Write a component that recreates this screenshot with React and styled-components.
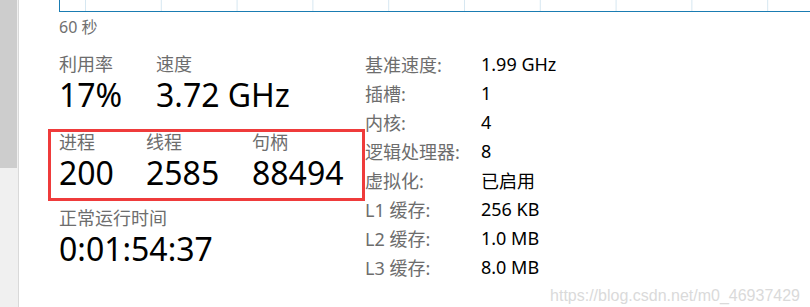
import styled, { createGlobalStyle } from 'styled-components'

const GlobalStyle = createGlobalStyle`
html, body {
  margin: 0;
  padding: 0;
  background: #fff;
}
body {
  width: 810px;
  height: 307px;
  overflow: hidden;
  font-family: "Noto Sans", "Noto Sans CJK SC", sans-serif;
}
`

const Page = styled.div`
position: relative;
display: flex;
width: 810px;
height: 307px;
overflow: hidden;
background: #fff;
`
const ScrollBar = styled.div`
width: 18px;
flex-shrink: 0;
display: flex;
flex-direction: column;
background: #f0f0f0;
border-right: 1px solid #d9d9d9;
`
const Thumb = styled.div`
width: 17px;
height: 168px;
background: #cdcdcd;
`
const ArrowButton = styled.div`
margin-top: auto;
height: 16px;
padding-top: 9px;
box-sizing: border-box;
overflow: hidden;
`
const Main = styled.div`
flex: 1;
min-width: 0;
padding-left: 40px;
display: flex;
flex-direction: column;
`
const Graph = styled.div`
height: 11px;
display: flex;
border-left: 1px solid #1a7cb2;
border-bottom: 1px solid #1a7cb2;
`
const GridLines = styled.div`
flex: 1;
margin-left: 25px;
background-image: linear-gradient(to right, #d6e7f1 1px, transparent 1px);
background-size: 75.8px 100%;
`
const Caption = styled.div`
margin-top: 4px;
font-size: 16px;
line-height: 22px;
color: #707070;
`
const Stats = styled.div`
display: flex;
margin-top: 11px;
`
const LeftCol = styled.div`
width: 306px;
flex-shrink: 0;
display: flex;
flex-direction: column;
padding-top: 5px;
box-sizing: border-box;
`
const Group = styled.div`
display: flex;
margin-top: ${p => p.$mt || 0}px;
`
const Highlight = styled(Group)`
width: 317px;
margin-left: -11px;
padding: 0 0 4px 8px;
border: 3px solid #ef3b3b;
box-sizing: border-box;
`
const Cell = styled.div`
width: ${p => (p.$w ? `${p.$w}px` : 'auto')};
flex-shrink: 0;
`
const Label = styled.div`
font-size: 18px;
line-height: 20px;
color: #6d6d6d;
white-space: nowrap;
`
const Value = styled.div`
font-size: 32px;
line-height: 42px;
color: #000;
white-space: nowrap;
`
const SpecGrid = styled.div`
display: grid;
grid-template-columns: 116px auto;
grid-auto-rows: 29px;
align-items: center;
font-size: 18px;
white-space: nowrap;
`
const SpecLabel = styled.div`
color: #6d6d6d;
`
const SpecValue = styled.div`
color: #000;
`
const Watermark = styled.div`
position: absolute;
right: 10px;
bottom: 2px;
font-family: "Liberation Sans", Arial, sans-serif;
font-size: 16px;
color: #dadada;
`

const specs = [
    ['基准速度:', '1.99 GHz'],
    ['插槽:', '1'],
    ['内核:', '4'],
    ['逻辑处理器:', '8'],
    ['虚拟化:', '已启用'],
    ['L1 缓存:', '256 KB'],
    ['L2 缓存:', '1.0 MB'],
    ['L3 缓存:', '8.0 MB'],
]

function Stat({ label, value, w }) {
    return (
        <Cell $w={w}>
            <Label>{label}</Label>
            <Value>{value}</Value>
        </Cell>
    )
}

function App() {
    const specRows = specs.map(([label, value]) => (
        <>
            <SpecLabel key={label + 'l'}>{label}</SpecLabel>
            <SpecValue key={label + 'v'}>{value}</SpecValue>
        </>
    ))

    return (
        <Page>
            <GlobalStyle />
            <ScrollBar>
                <Thumb />
                <ArrowButton>
                    <svg width="14" height="9" viewBox="0 0 14 9">
                        <path d="M0.8 1 L6.5 6.7 L12.2 1" fill="none" stroke="#606060" strokeWidth="1.6" />
                    </svg>
                </ArrowButton>
            </ScrollBar>
            <Main>
                <Graph><GridLines /></Graph>
                <Caption>60 秒</Caption>
                <Stats>
                    <LeftCol>
                        <Group>
                            <Stat w={97} label="利用率" value="17%" />
                            <Stat label="速度" value="3.72 GHz" />
                        </Group>
                        <Highlight $mt={13}>
                            <Stat w={87} label="进程" value="200" />
                            <Stat w={106} label="线程" value="2585" />
                            <Stat label="句柄" value="88494" />
                        </Highlight>
                        <Group $mt={7}>
                            <Stat label="正常运行时间" value="0:01:54:37" />
                        </Group>
                    </LeftCol>
                    <SpecGrid>{specRows}</SpecGrid>
                </Stats>
            </Main>
            <Watermark>https://blog.csdn.net/m0_46937429</Watermark>
        </Page>
    )
}

export default App
